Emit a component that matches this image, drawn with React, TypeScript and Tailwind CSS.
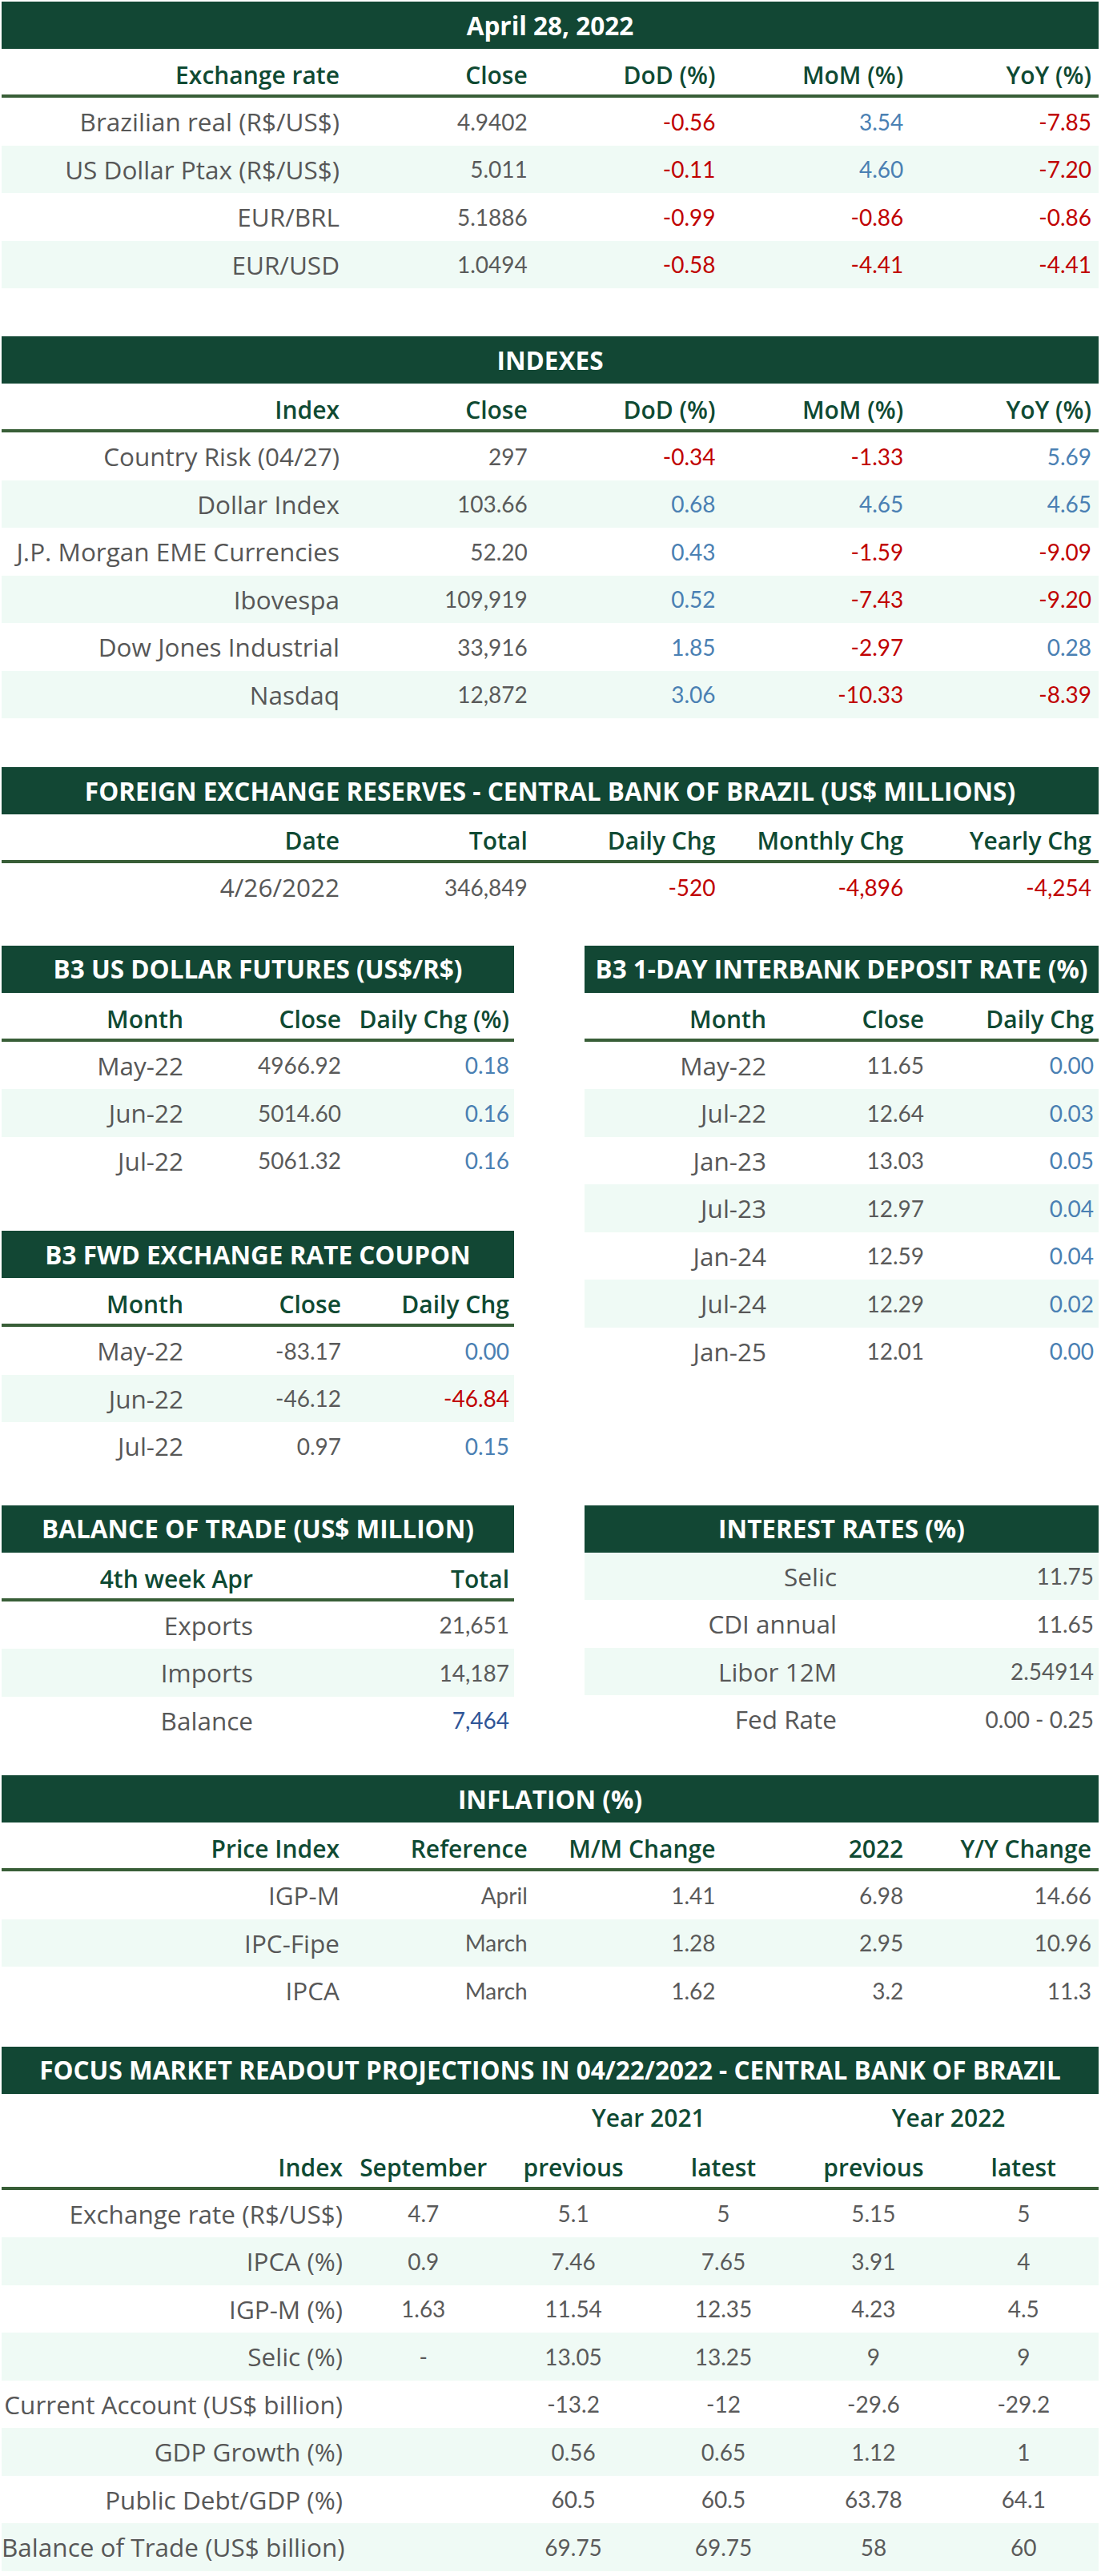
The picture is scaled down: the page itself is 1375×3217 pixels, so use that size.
import React from 'react';

type C = 'r' | 'b' | 'n' | 'd';
type Cell = [string, C];

const colorOf = (c: C) =>
  c === 'r' ? 'text-[#c00000]' : c === 'b' ? 'text-[#4a80b3]' : c === 'd' ? 'text-[#2f5597]' : 'text-[#5a5a5a]';

const LABEL = 'font-[family-name:Open_Sans,sans-serif]';
const VALUE = 'font-[family-name:Lato,sans-serif] font-normal';

const G5 = 'grid grid-cols-[431px_repeat(4,minmax(0,1fr))]';
const G3 = 'grid grid-cols-[233px_197px_minmax(0,1fr)]';
const G2 = 'grid grid-cols-2';
const G6 = 'grid grid-cols-[433px_repeat(5,minmax(0,1fr))]';

function Title({ children }: { children: React.ReactNode }) {
  return (
    <div className={`h-[59px] bg-[#124734] flex items-center justify-center text-white font-bold text-[31.5px] whitespace-nowrap overflow-hidden ${LABEL}`}>
      {children}
    </div>
  );
}

function HeadRow({ cols, grid, pad, center }: { cols: string[]; grid: string; pad: string; center?: boolean }) {
  return (
    <div className={`${grid} h-[61px] border-b-[4px] border-[#385e37] items-center pt-[8px]`}>
      {cols.map((c, i) => (
        <div
          key={i}
          className={`${center && i > 0 ? 'text-center' : `text-right ${pad}`} text-[#0f4a33] font-semibold text-[30px] whitespace-nowrap ${LABEL}`}
        >
          {c}
        </div>
      ))}
    </div>
  );
}

function Row({ label, cells, grid, pad, striped, center }: { label: string; cells: Cell[]; grid: string; pad: string; striped: boolean; center?: boolean }) {
  return (
    <div className={`${grid} h-[59.5px] items-center ${striped ? 'bg-[#effaf5]' : 'bg-white'}`}>
      <div className={`text-right ${pad} text-[#575757] text-[31.5px] whitespace-nowrap ${LABEL}`}>{label}</div>
      {cells.map((c, i) => (
        <div key={i} className={`${center ? 'text-center' : `text-right ${pad}`} ${colorOf(c[1])} ${VALUE} text-[28px] whitespace-nowrap`}>
          {c[0]}
        </div>
      ))}
    </div>
  );
}

function Table({ title, head, rows, grid, pad }: { title: string; head: string[]; rows: [string, Cell[]][]; grid: string; pad: string }) {
  return (
    <div>
      <Title>{title}</Title>
      <HeadRow cols={head} grid={grid} pad={pad} />
      {rows.map((r, i) => (
        <Row key={i} label={r[0]} cells={r[1]} grid={grid} pad={pad} striped={i % 2 === 1} />
      ))}
    </div>
  );
}

const t1: [string, Cell[]][] = [
  ['Brazilian real (R$/US$)', [['4.9402', 'n'], ['-0.56', 'r'], ['3.54', 'b'], ['-7.85', 'r']]],
  ['US Dollar Ptax (R$/US$)', [['5.011', 'n'], ['-0.11', 'r'], ['4.60', 'b'], ['-7.20', 'r']]],
  ['EUR/BRL', [['5.1886', 'n'], ['-0.99', 'r'], ['-0.86', 'r'], ['-0.86', 'r']]],
  ['EUR/USD', [['1.0494', 'n'], ['-0.58', 'r'], ['-4.41', 'r'], ['-4.41', 'r']]],
];

const t2: [string, Cell[]][] = [
  ['Country Risk (04/27)', [['297', 'n'], ['-0.34', 'r'], ['-1.33', 'r'], ['5.69', 'b']]],
  ['Dollar Index', [['103.66', 'n'], ['0.68', 'b'], ['4.65', 'b'], ['4.65', 'b']]],
  ['J.P. Morgan EME Currencies', [['52.20', 'n'], ['0.43', 'b'], ['-1.59', 'r'], ['-9.09', 'r']]],
  ['Ibovespa', [['109,919', 'n'], ['0.52', 'b'], ['-7.43', 'r'], ['-9.20', 'r']]],
  ['Dow Jones Industrial', [['33,916', 'n'], ['1.85', 'b'], ['-2.97', 'r'], ['0.28', 'b']]],
  ['Nasdaq', [['12,872', 'n'], ['3.06', 'b'], ['-10.33', 'r'], ['-8.39', 'r']]],
];

const t3: [string, Cell[]][] = [['4/26/2022', [['346,849', 'n'], ['-520', 'r'], ['-4,896', 'r'], ['-4,254', 'r']]]];

const fut: [string, Cell[]][] = [
  ['May-22', [['4966.92', 'n'], ['0.18', 'b']]],
  ['Jun-22', [['5014.60', 'n'], ['0.16', 'b']]],
  ['Jul-22', [['5061.32', 'n'], ['0.16', 'b']]],
];

const di: [string, Cell[]][] = [
  ['May-22', [['11.65', 'n'], ['0.00', 'b']]],
  ['Jul-22', [['12.64', 'n'], ['0.03', 'b']]],
  ['Jan-23', [['13.03', 'n'], ['0.05', 'b']]],
  ['Jul-23', [['12.97', 'n'], ['0.04', 'b']]],
  ['Jan-24', [['12.59', 'n'], ['0.04', 'b']]],
  ['Jul-24', [['12.29', 'n'], ['0.02', 'b']]],
  ['Jan-25', [['12.01', 'n'], ['0.00', 'b']]],
];

const fwd: [string, Cell[]][] = [
  ['May-22', [['-83.17', 'n'], ['0.00', 'b']]],
  ['Jun-22', [['-46.12', 'n'], ['-46.84', 'r']]],
  ['Jul-22', [['0.97', 'n'], ['0.15', 'b']]],
];

const bot: [string, Cell[]][] = [
  ['Exports', [['21,651', 'n']]],
  ['Imports', [['14,187', 'n']]],
  ['Balance', [['7,464', 'd']]],
];

const rates: [string, Cell[]][] = [
  ['Selic', [['11.75', 'n']]],
  ['CDI annual', [['11.65', 'n']]],
  ['Libor 12M', [['2.54914', 'n']]],
  ['Fed Rate', [['0.00 - 0.25', 'n']]],
];

const infl: [string, Cell[]][] = [
  ['IGP-M', [['April', 'n'], ['1.41', 'n'], ['6.98', 'n'], ['14.66', 'n']]],
  ['IPC-Fipe', [['March', 'n'], ['1.28', 'n'], ['2.95', 'n'], ['10.96', 'n']]],
  ['IPCA', [['March', 'n'], ['1.62', 'n'], ['3.2', 'n'], ['11.3', 'n']]],
];

const focus: [string, string[]][] = [
  ['Exchange rate (R$/US$)', ['4.7', '5.1', '5', '5.15', '5']],
  ['IPCA (%)', ['0.9', '7.46', '7.65', '3.91', '4']],
  ['IGP-M (%)', ['1.63', '11.54', '12.35', '4.23', '4.5']],
  ['Selic (%)', ['-', '13.05', '13.25', '9', '9']],
  ['Current Account (US$ billion)', ['', '-13.2', '-12', '-29.6', '-29.2']],
  ['GDP Growth (%)', ['', '0.56', '0.65', '1.12', '1']],
  ['Public Debt/GDP (%)', ['', '60.5', '60.5', '63.78', '64.1']],
  ['Balance of Trade (US$ billion)', ['', '69.75', '69.75', '58', '60']],
];

export default function App() {
  return (
    <div className="w-[1375px] bg-white font-[family-name:Lato,sans-serif] pl-[2px] pr-[3px] pt-[2px] pb-[4px]">
      <Table title="April 28, 2022" head={['Exchange rate', 'Close', 'DoD (%)', 'MoM (%)', 'YoY (%)']} rows={t1} grid={G5} pad="pr-[9px]" />

      <div className="mt-[60px]">
        <Table title="INDEXES" head={['Index', 'Close', 'DoD (%)', 'MoM (%)', 'YoY (%)']} rows={t2} grid={G5} pad="pr-[9px]" />
      </div>

      <div className="mt-[61px]">
        <Table
          title="FOREIGN EXCHANGE RESERVES - CENTRAL BANK OF BRAZIL (US$ MILLIONS)"
          head={['Date', 'Total', 'Daily Chg', 'Monthly Chg', 'Yearly Chg']}
          rows={t3}
          grid={G5}
          pad="pr-[9px]"
        />
      </div>

      <div className="mt-[43px] grid grid-cols-[640px_642px] justify-between items-start">
        <div className="flex flex-col gap-[58px]">
          <Table title="B3 US DOLLAR FUTURES (US$/R$)" head={['Month', 'Close', 'Daily Chg (%)']} rows={fut} grid={G3} pad="pr-[6px]" />
          <Table title="B3 FWD EXCHANGE RATE COUPON" head={['Month', 'Close', 'Daily Chg']} rows={fwd} grid={G3} pad="pr-[6px]" />
        </div>
        <Table title="B3 1-DAY INTERBANK DEPOSIT RATE (%)" head={['Month', 'Close', 'Daily Chg']} rows={di} grid={G3} pad="pr-[6px]" />
      </div>

      <div className="mt-[44px] grid grid-cols-[640px_642px] justify-between items-start">
        <Table title="BALANCE OF TRADE (US$ MILLION)" head={['4th week Apr', 'Total']} rows={bot} grid={G2} pad="pr-[6px]" />
        <div>
          <Title>INTEREST RATES (%)</Title>
          {rates.map((r, i) => (
            <Row key={i} label={r[0]} cells={r[1]} grid={G2} pad="pr-[6px]" striped={i % 2 === 0} />
          ))}
        </div>
      </div>

      <div className="mt-[39px]">
        <Table
          title="INFLATION (%)"
          head={['Price Index', 'Reference', 'M/M Change', '2022', 'Y/Y Change']}
          rows={infl}
          grid={G5}
          pad="pr-[9px]"
        />
      </div>

      <div className="mt-[40px]">
        <Title>FOCUS MARKET READOUT PROJECTIONS IN 04/22/2022 - CENTRAL BANK OF BRAZIL</Title>
        <div className={`${G6} h-[59px] items-center`}>
          <div />
          <div />
          <div className={`col-span-2 text-center text-[#0f4a33] font-semibold text-[30px] ${LABEL}`}>Year 2021</div>
          <div className={`col-span-2 text-center text-[#0f4a33] font-semibold text-[30px] ${LABEL}`}>Year 2022</div>
        </div>
        <HeadRow cols={['Index', 'September', 'previous', 'latest', 'previous', 'latest']} grid={G6} pad="pr-[7px]" center />
        {focus.map((r, i) => (
          <Row
            key={i}
            label={r[0]}
            cells={r[1].map((v) => [v, 'n'] as Cell)}
            grid={G6}
            pad="pr-[7px]"
            striped={i % 2 === 1}
            center
          />
        ))}
      </div>
    </div>
  );
}
